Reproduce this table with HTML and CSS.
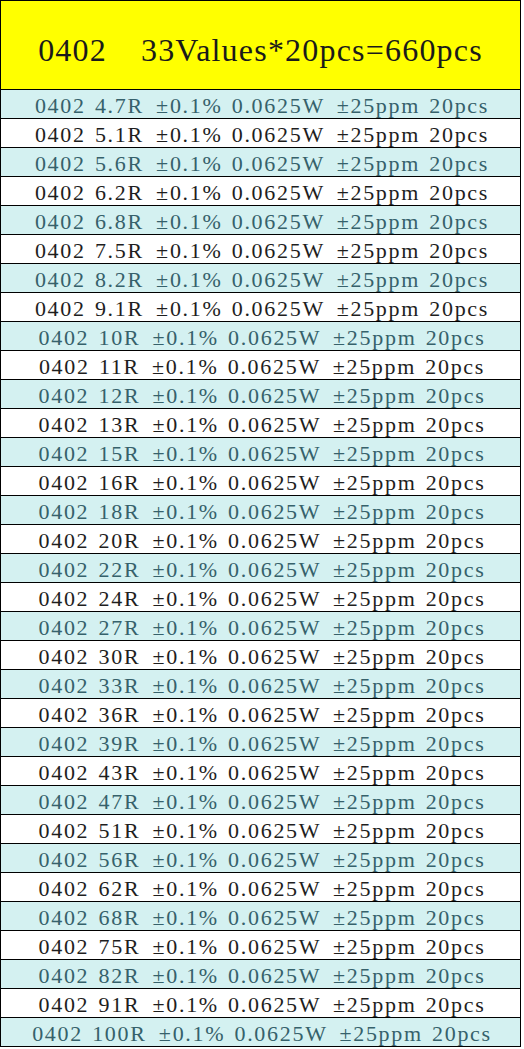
FILE: index.html
```html
<!DOCTYPE html>
<html>
<head>
<meta charset="utf-8">
<link rel="stylesheet" href="styles.css">
</head>
<body>
<div class="sheet">
  <div class="head"><span class="code">0402</span>33Values*20pcs=660pcs</div>
  <div class="row c">0402 4.7R <span class="pm">±</span>0.1% 0.0625W <span class="pm">±</span>25ppm 20pcs</div>
  <div class="row">0402 5.1R <span class="pm">±</span>0.1% 0.0625W <span class="pm">±</span>25ppm 20pcs</div>
  <div class="row c">0402 5.6R <span class="pm">±</span>0.1% 0.0625W <span class="pm">±</span>25ppm 20pcs</div>
  <div class="row">0402 6.2R <span class="pm">±</span>0.1% 0.0625W <span class="pm">±</span>25ppm 20pcs</div>
  <div class="row c">0402 6.8R <span class="pm">±</span>0.1% 0.0625W <span class="pm">±</span>25ppm 20pcs</div>
  <div class="row">0402 7.5R <span class="pm">±</span>0.1% 0.0625W <span class="pm">±</span>25ppm 20pcs</div>
  <div class="row c">0402 8.2R <span class="pm">±</span>0.1% 0.0625W <span class="pm">±</span>25ppm 20pcs</div>
  <div class="row">0402 9.1R <span class="pm">±</span>0.1% 0.0625W <span class="pm">±</span>25ppm 20pcs</div>
  <div class="row c">0402 10R <span class="pm">±</span>0.1% 0.0625W <span class="pm">±</span>25ppm 20pcs</div>
  <div class="row">0402 11R <span class="pm">±</span>0.1% 0.0625W <span class="pm">±</span>25ppm 20pcs</div>
  <div class="row c">0402 12R <span class="pm">±</span>0.1% 0.0625W <span class="pm">±</span>25ppm 20pcs</div>
  <div class="row">0402 13R <span class="pm">±</span>0.1% 0.0625W <span class="pm">±</span>25ppm 20pcs</div>
  <div class="row c">0402 15R <span class="pm">±</span>0.1% 0.0625W <span class="pm">±</span>25ppm 20pcs</div>
  <div class="row">0402 16R <span class="pm">±</span>0.1% 0.0625W <span class="pm">±</span>25ppm 20pcs</div>
  <div class="row c">0402 18R <span class="pm">±</span>0.1% 0.0625W <span class="pm">±</span>25ppm 20pcs</div>
  <div class="row">0402 20R <span class="pm">±</span>0.1% 0.0625W <span class="pm">±</span>25ppm 20pcs</div>
  <div class="row c">0402 22R <span class="pm">±</span>0.1% 0.0625W <span class="pm">±</span>25ppm 20pcs</div>
  <div class="row">0402 24R <span class="pm">±</span>0.1% 0.0625W <span class="pm">±</span>25ppm 20pcs</div>
  <div class="row c">0402 27R <span class="pm">±</span>0.1% 0.0625W <span class="pm">±</span>25ppm 20pcs</div>
  <div class="row">0402 30R <span class="pm">±</span>0.1% 0.0625W <span class="pm">±</span>25ppm 20pcs</div>
  <div class="row c">0402 33R <span class="pm">±</span>0.1% 0.0625W <span class="pm">±</span>25ppm 20pcs</div>
  <div class="row">0402 36R <span class="pm">±</span>0.1% 0.0625W <span class="pm">±</span>25ppm 20pcs</div>
  <div class="row c">0402 39R <span class="pm">±</span>0.1% 0.0625W <span class="pm">±</span>25ppm 20pcs</div>
  <div class="row">0402 43R <span class="pm">±</span>0.1% 0.0625W <span class="pm">±</span>25ppm 20pcs</div>
  <div class="row c">0402 47R <span class="pm">±</span>0.1% 0.0625W <span class="pm">±</span>25ppm 20pcs</div>
  <div class="row">0402 51R <span class="pm">±</span>0.1% 0.0625W <span class="pm">±</span>25ppm 20pcs</div>
  <div class="row c">0402 56R <span class="pm">±</span>0.1% 0.0625W <span class="pm">±</span>25ppm 20pcs</div>
  <div class="row">0402 62R <span class="pm">±</span>0.1% 0.0625W <span class="pm">±</span>25ppm 20pcs</div>
  <div class="row c">0402 68R <span class="pm">±</span>0.1% 0.0625W <span class="pm">±</span>25ppm 20pcs</div>
  <div class="row">0402 75R <span class="pm">±</span>0.1% 0.0625W <span class="pm">±</span>25ppm 20pcs</div>
  <div class="row c">0402 82R <span class="pm">±</span>0.1% 0.0625W <span class="pm">±</span>25ppm 20pcs</div>
  <div class="row">0402 91R <span class="pm">±</span>0.1% 0.0625W <span class="pm">±</span>25ppm 20pcs</div>
  <div class="row c last">0402 100R <span class="pm">±</span>0.1% 0.0625W <span class="pm">±</span>25ppm 20pcs</div>
</div>
</body>
</html>
```

FILE: styles.css
```css
html, body {
  margin: 0;
  padding: 0;
  background: #ffffff;
}
.sheet {
  width: 521px;
  box-sizing: border-box;
  border: 1px solid #000;
  display: flex;
  flex-direction: column;
  font-family: "Liberation Serif", "Times New Roman", serif;
}
.head {
  height: 89px;
  box-sizing: border-box;
  background: #ffff00;
  border-bottom: 1px solid #000;
  display: flex;
  align-items: center;
  justify-content: center;
  font-size: 32px;
  letter-spacing: 1.2px;
  color: #1a1a1a;
  padding-top: 10px;
  padding-left: 0;
}
.head .code {
  margin-right: 34px;
}
.row {
  height: 29px;
  box-sizing: border-box;
  border-bottom: 1px solid #000;
  display: flex;
  align-items: center;
  justify-content: center;
  font-size: 22px;
  letter-spacing: 1.7px;
  word-spacing: 2px;
  white-space: pre;
  color: #1e1e1e;
  background: #fff;
  padding-top: 4px;
  padding-left: 3px;
}
.row .pm {
  margin-left: 3px;
}
.row.c {
  background: #d4f1f1;
  color: #36616b;
}
.row.last {
  border-bottom: none;
  height: 28px;
}
```
